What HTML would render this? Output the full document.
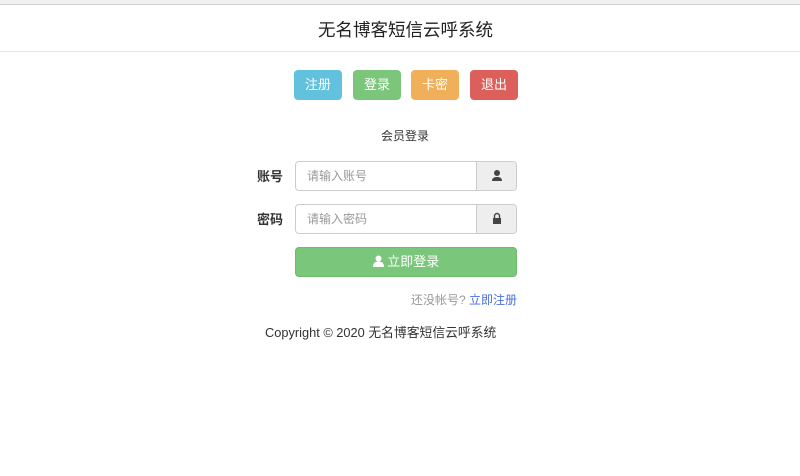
<!DOCTYPE html>
<html><head><meta charset="utf-8"><style>
*{box-sizing:border-box;margin:0;padding:0}
body{width:800px;height:476px;background:#fff;font-family:"Liberation Sans","Noto Sans CJK SC",sans-serif;position:relative;overflow:hidden;color:#333}
.top{position:absolute;left:0;top:0;width:800px;height:5px;background:#f1f1f1;border-bottom:1px solid #cfcfcf}
.hdr{position:absolute;left:0;top:6px;width:800px;height:46px;border-bottom:1px solid #e5e5e5;text-align:center;padding-left:11px;font-size:17.5px;line-height:48px;color:#222}
.b{position:absolute;top:70px;height:30px;width:48px;border-radius:4px;color:#fff;font-size:13px;text-align:center;line-height:30px}
.a{position:absolute;font-size:12px}
.ig{position:absolute;left:295px;width:222px;height:30px;border:1px solid #ccc;border-radius:4px;overflow:hidden}
.ig span{position:absolute;left:11px;top:0;line-height:28px;font-size:12px;color:#999}
.ig i{position:absolute;right:0;top:0;width:40px;height:28px;background:#eee;border-left:1px solid #ccc}
</style></head><body>
<div class="top"></div>
<div class="hdr">无名博客短信云呼系统</div>
<div class="b" style="left:294px;background:#62c2de">注册</div>
<div class="b" style="left:353px;background:#7cc67c">登录</div>
<div class="b" style="left:411px;background:#f0b05a">卡密</div>
<div class="b" style="left:470px;background:#dc5f5b">退出</div>
<div class="a" style="left:381px;top:127px;color:#333">会员登录</div>
<div class="a" style="left:257px;top:166px;font-weight:bold;font-size:13px">账号</div>
<div class="a" style="left:257px;top:209px;font-weight:bold;font-size:13px">密码</div>
<div class="ig" style="top:161px"><span>请输入账号</span><i><svg width="40" height="28" viewBox="0 0 40 28"><circle cx="20" cy="11" r="3" fill="#444"/><path d="M15 19c0-3 2-4 5-4s5 1 5 4z" fill="#444"/></svg></i></div>
<div class="ig" style="top:204px"><span>请输入密码</span><i><svg width="40" height="28" viewBox="0 0 40 28"><rect x="16" y="13" width="8" height="6" fill="#444"/><path d="M17.5 13v-2a2.5 2.5 0 0 1 5 0v2" stroke="#444" stroke-width="1.4" fill="none"/></svg></i></div>
<div style="position:absolute;left:295px;top:247px;width:222px;height:30px;background:#7ac67a;border:1px solid #6dbb6d;border-radius:4px;color:#fff;font-size:13px;text-align:center;line-height:28px"><svg width="11" height="12" viewBox="0 0 11 12" style="vertical-align:-1px"><circle cx="5.5" cy="3.5" r="3" fill="#fff"/><path d="M0 12c0-4 2-5.5 5.5-5.5S11 8 11 12z" fill="#fff"/></svg> 立即登录</div>
<div class="a" style="right:283px;top:291px;color:#999">还没帐号? <span style="color:#4a6fe0">立即注册</span></div>
<div class="a" style="left:265px;top:322px;color:#333;font-size:12.8px">Copyright © 2020 无名博客短信云呼系统</div>
</body></html>
